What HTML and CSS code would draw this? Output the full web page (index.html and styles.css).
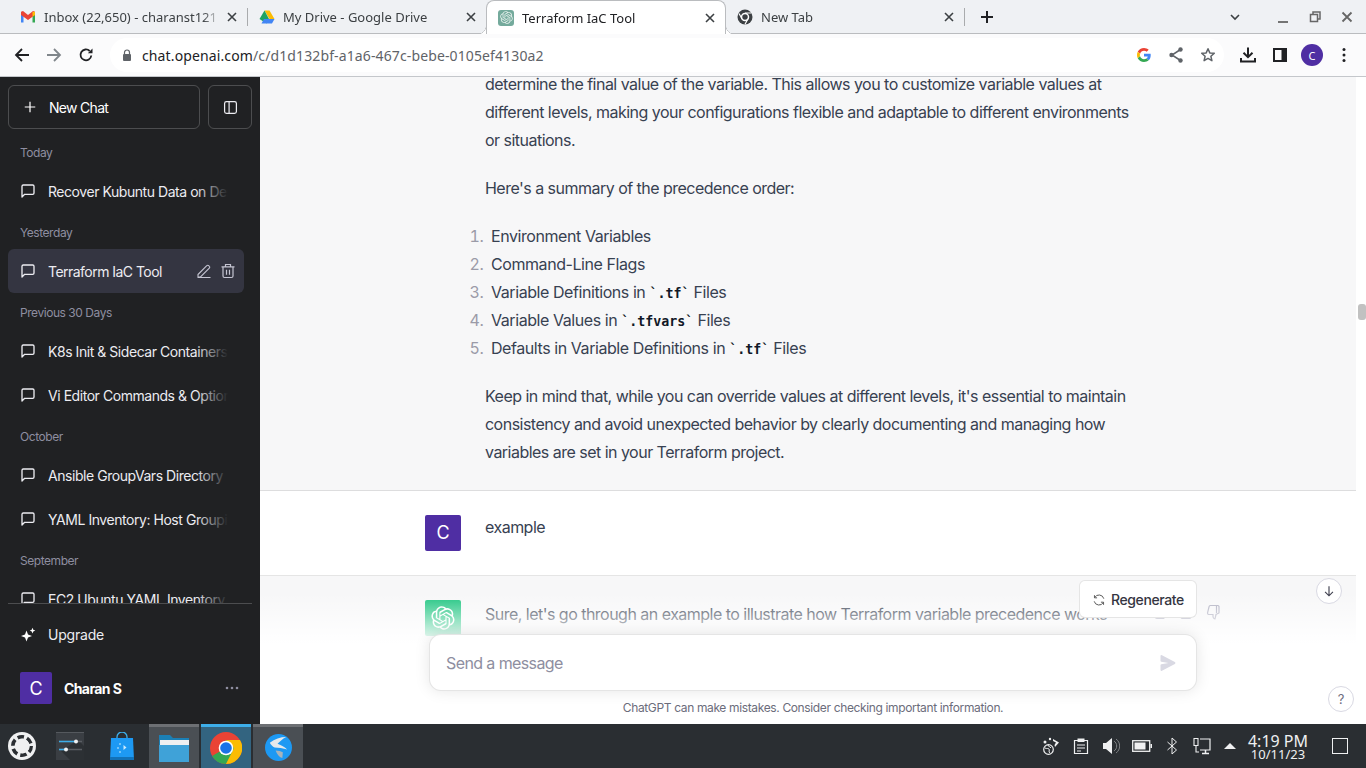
FILE: index.html
```html
<!DOCTYPE html>
<html lang="en">
  <head>
    <meta charset="UTF-8" />
    <meta name="viewport" content="width=device-width, initial-scale=1.0" />
    <title>Terraform IaC Tool</title>
    <link rel="stylesheet" href="styles.css">
  </head>
  <body>
    <svg class="sprites" width="0" height="0">
      <symbol id="chat" viewBox="0 0 24 24"><path d="M21 15a2 2 0 0 1-2 2H7l-4 4V5a2 2 0 0 1 2-2h14a2 2 0 0 1 2 2z" fill="none" stroke="currentColor" stroke-width="2" stroke-linecap="round" stroke-linejoin="round"/></symbol>
      <symbol id="oai" viewBox="0 0 41 41"><path fill="currentColor" d="M37.5324 16.8707C37.9808 15.5241 38.1363 14.0974 37.9886 12.6859C37.8409 11.2744 37.3934 9.91076 36.676 8.68622C35.6126 6.83404 33.9882 5.3676 32.0373 4.4985C30.0864 3.62941 27.9098 3.40259 25.8215 3.85078C24.8796 2.7893 23.7219 1.94125 22.4257 1.36341C21.1295 0.785575 19.7249 0.491269 18.3058 0.500197C16.1708 0.495044 14.0893 1.16803 12.3614 2.42214C10.6335 3.67624 9.34853 5.44666 8.6917 7.47815C7.30085 7.76286 5.98686 8.3414 4.8377 9.17505C3.68854 10.0087 2.73073 11.0782 2.02839 12.312C0.956464 14.1591 0.498905 16.2988 0.721698 18.4228C0.944492 20.5467 1.83612 22.5449 3.268 24.1293C2.81966 25.4759 2.66413 26.9026 2.81182 28.3141C2.95951 29.7256 3.40701 31.0892 4.12437 32.3138C5.18791 34.1659 6.8123 35.6322 8.76321 36.5013C10.7141 37.3704 12.8907 37.5973 14.9789 37.1492C15.9208 38.2107 17.0786 39.0587 18.3747 39.6366C19.6709 40.2144 21.0755 40.5087 22.4946 40.4998C24.6307 40.5054 26.7133 39.8321 28.4418 38.5772C30.1704 37.3223 31.4556 35.5506 32.1119 33.5179C33.5027 33.2332 34.8167 32.6547 35.9659 31.821C37.115 30.9874 38.0728 29.9178 38.7752 28.684C39.8458 26.8371 40.3023 24.6979 40.0789 22.5748C39.8556 20.4517 38.9639 18.4544 37.5324 16.8707ZM22.4978 37.8849C20.7443 37.8874 19.0459 37.2733 17.6994 36.1501C17.7601 36.117 17.8666 36.0586 17.936 36.0161L25.9004 31.4156C26.1003 31.3019 26.2663 31.137 26.3813 30.9378C26.4964 30.7386 26.5563 30.5124 26.5549 30.2825V19.0542L29.9213 20.998C29.9389 21.0068 29.9541 21.0198 29.9656 21.0359C29.977 21.052 29.9842 21.0707 29.9867 21.0902V30.3889C29.9842 32.375 29.1946 34.2791 27.7909 35.6841C26.3872 37.0892 24.4838 37.8806 22.4978 37.8849ZM6.39227 31.0064C5.51397 29.4888 5.19742 27.7107 5.49804 25.9832C5.55718 26.0187 5.66048 26.0818 5.73461 26.1244L13.699 30.7248C13.8975 30.8408 14.1233 30.902 14.3532 30.902C14.583 30.902 14.8088 30.8408 15.0073 30.7248L24.731 25.1103V28.9979C24.7321 29.0177 24.7283 29.0376 24.7199 29.0556C24.7115 29.0736 24.6988 29.0893 24.6829 29.1012L16.6317 33.7497C14.9096 34.7416 12.8643 35.0097 10.9447 34.4954C9.02506 33.9811 7.38785 32.7263 6.39227 31.0064ZM4.29707 13.6194C5.17156 12.0998 6.55279 10.9364 8.19885 10.3327C8.19885 10.4013 8.19491 10.5228 8.19491 10.6071V19.808C8.19351 20.0378 8.25334 20.2638 8.36823 20.4629C8.48312 20.6619 8.64893 20.8267 8.84863 20.9404L18.5723 26.5542L15.206 28.4979C15.1894 28.5089 15.1703 28.5155 15.1505 28.5173C15.1307 28.5191 15.1107 28.516 15.0924 28.5082L7.04046 23.8557C5.32135 22.8601 4.06716 21.2235 3.55289 19.3046C3.03862 17.3858 3.30624 15.3413 4.29707 13.6194ZM31.955 20.0556L22.2312 14.4411L25.5976 12.4981C25.6142 12.4872 25.6333 12.4805 25.6531 12.4787C25.6729 12.4769 25.6928 12.4801 25.7111 12.4879L33.7631 17.1364C34.9967 17.849 36.0017 18.8982 36.6606 20.1613C37.3194 21.4244 37.6047 22.849 37.4832 24.2684C37.3617 25.6878 36.8382 27.0432 35.9743 28.1759C35.1103 29.3086 33.9415 30.1717 32.6047 30.6641C32.6047 30.5947 32.6047 30.4733 32.6047 30.3889V21.188C32.6066 20.9586 32.5474 20.7328 32.4332 20.5338C32.319 20.3348 32.154 20.1698 31.955 20.0556ZM35.3055 15.0128C35.2464 14.9765 35.1431 14.9142 35.069 14.8717L27.1045 10.2712C26.906 10.1554 26.6803 10.0943 26.4504 10.0943C26.2206 10.0943 25.9948 10.1554 25.7963 10.2712L16.0726 15.8858V11.9982C16.0715 11.9783 16.0753 11.9585 16.0837 11.9405C16.0921 11.9225 16.1048 11.9068 16.1207 11.8949L24.1719 7.25025C25.4053 6.53903 26.8158 6.19376 28.2383 6.25482C29.6608 6.31589 31.0364 6.78077 32.2044 7.59508C33.3723 8.40939 34.2842 9.53945 34.8334 10.8531C35.3826 12.1667 35.5464 13.6095 35.3055 15.0128ZM14.2424 21.9419L10.8752 19.9981C10.8576 19.9893 10.8423 19.9763 10.8309 19.9602C10.8195 19.9441 10.8122 19.9254 10.8098 19.9058V10.6071C10.8107 9.18295 11.2173 7.78848 11.9819 6.58696C12.7466 5.38544 13.8377 4.42659 15.1275 3.82264C16.4173 3.21869 17.8524 2.99464 19.2649 3.1767C20.6775 3.35876 22.0089 3.93941 23.1034 4.85067C23.0427 4.88379 22.937 4.94215 22.8668 4.98473L14.9024 9.58517C14.7025 9.69878 14.5366 9.86356 14.4215 10.0626C14.3065 10.2616 14.2466 10.4877 14.2479 10.7175L14.2424 21.9419ZM16.071 17.9991L20.4018 15.4978L24.7325 17.9975V22.9985L20.4018 25.4983L16.071 22.9985V17.9991Z"/></symbol>
      <symbol id="close" viewBox="0 0 10 10"><path d="M1 1l8 8M9 1l-8 8" stroke="currentColor" stroke-width="1.600" fill="none"/></symbol>
    </svg>

    <div class="tabstrip">
      <div class="tab">
        <svg class="favicon" viewBox="0 0 16 16"><path d="M1 3.500v10h2.500V7z" fill="#4285f4"/><path d="M15 3.500v10h-2.500V7z" fill="#34a853"/><path d="M1 2.800 3 2l5 4 5-4 2 .8V6l-7 5-7-5z" fill="#ea4335"/><path d="M12.500 3 15 2.800V6l-2.500 1.800z" fill="#fbbc04"/></svg>
        <span class="tab-title">Inbox (22,650) - charanst121</span>
        <svg class="tab-close"><use href="#close"/></svg>
      </div>
      <div class="tab tab-sep">
        <svg class="favicon" viewBox="0 0 16 16"><path d="M5.500 1.500h5L15.500 10h-5z" fill="#fbbc04"/><path d="M5.500 1.500 10 10l-2.500 4.500L.500 10z" fill="#1ea362"/><path d="M5 10h10.500L13 14.500H2.500z" fill="#4285f4"/></svg>
        <span class="tab-title">My Drive - Google Drive</span>
        <svg class="tab-close"><use href="#close"/></svg>
      </div>
      <div class="tab active">
        <span class="favicon oai-fav"><svg><use href="#oai"/></svg></span>
        <span class="tab-title">Terraform IaC Tool</span>
        <svg class="tab-close"><use href="#close"/></svg>
      </div>
      <div class="tab">
        <svg class="favicon" viewBox="0 0 16 16"><circle cx="8" cy="8" r="7.500" fill="#3c4043"/><circle cx="8" cy="8" r="3.500" fill="#3c4043" stroke="#fff" stroke-width="1.500"/><path d="M8 4h6.200M5 9.700 2 4.500M11 9.700l-3 5.500" stroke="#fff" stroke-width="1.200"/></svg>
        <span class="tab-title">New Tab</span>
        <svg class="tab-close"><use href="#close"/></svg>
      </div>
      <div class="new-tab">
        <svg viewBox="0 0 14 14"><path d="M7 1v12M1 7h12" stroke="#202124" stroke-width="2"/></svg>
      </div>
      <div class="win-btns">
        <svg class="win-ico tab-list" viewBox="0 0 12 12"><path d="M2 4l4 4 4-4" fill="none" stroke="#3c4043" stroke-width="1.600"/></svg>
        <svg class="win-ico" viewBox="0 0 12 12"><path d="M1 11h10" stroke="#666" stroke-width="1.800"/></svg>
        <svg class="win-ico" viewBox="0 0 12 12"><path d="M1.500 3.500h7v7h-7z" fill="none" stroke="#666" stroke-width="1.500"/><path d="M4 3V1h7v7H9" fill="none" stroke="#666" stroke-width="1.500"/></svg>
        <svg class="win-ico" viewBox="0 0 12 12"><path d="M1.500 1.500l9 9M10.500 1.500l-9 9" stroke="#666" stroke-width="1.800"/></svg>
      </div>
    </div>

    <div class="toolbar">
      <svg class="nav-ico" viewBox="0 0 16 16"><path d="M15 8H2.500M8 2 2 8l6 6" fill="none" stroke="#202124" stroke-width="1.800"/></svg>
      <svg class="nav-ico" viewBox="0 0 16 16"><path d="M1 8h12.500M8 2l6 6-6 6" fill="none" stroke="#80868b" stroke-width="1.800"/></svg>
      <svg class="nav-ico" viewBox="0 0 16 16"><path d="M13.300 8.500A5.400 5.400 0 1 1 11.700 4" fill="none" stroke="#202124" stroke-width="1.800"/><path d="M9.800 6.200H14.500V1.500z" fill="#202124"/></svg>
      <div class="omnibox">
        <svg class="lock" viewBox="0 0 10 12"><path d="M2.500 5V3.500a2.500 2.500 0 0 1 5 0V5" fill="none" stroke="#5f6368" stroke-width="1.200"/><rect x="1" y="5" width="8" height="7" rx="1" fill="#5f6368"/></svg>
        <span class="url"><span class="host">chat.openai.com</span>/c/d1d132bf-a1a6-467c-bebe-0105ef4130a2</span>
        <span class="omni-icons">
          <svg viewBox="0 0 48 48"><path fill="#EA4335" d="M24 9.500c3.540 0 6.710 1.220 9.210 3.600l6.850-6.850C35.900 2.380 30.470 0 24 0 14.620 0 6.510 5.380 2.560 13.220l7.980 6.190C12.430 13.720 17.740 9.500 24 9.500z"/><path fill="#4285F4" d="M46.980 24.550c0-1.570-.15-3.090-.38-4.550H24v9.020h12.940c-.58 2.960-2.260 5.480-4.780 7.180l7.730 6c4.510-4.180 7.090-10.360 7.090-17.650z"/><path fill="#FBBC05" d="M10.530 28.590c-.48-1.450-.76-2.990-.76-4.590s.27-3.140.76-4.590l-7.980-6.190C.92 16.460 0 20.120 0 24c0 3.880.92 7.540 2.560 10.780l7.970-6.190z"/><path fill="#34A853" d="M24 48c6.480 0 11.930-2.130 15.890-5.810l-7.730-6c-2.150 1.450-4.920 2.300-8.160 2.300-6.260 0-11.570-4.220-13.470-9.910l-7.980 6.190C6.510 42.620 14.620 48 24 48z"/></svg>
          <svg viewBox="0 0 16 16"><path d="M12.500 2.500 4 8l8.500 5.500" fill="none" stroke="#5f6368" stroke-width="1.500"/><circle cx="12.500" cy="2.500" r="2.200" fill="#5f6368"/><circle cx="3.500" cy="8" r="2.200" fill="#5f6368"/><circle cx="12.500" cy="13.500" r="2.200" fill="#5f6368"/></svg>
          <svg viewBox="0 0 16 16"><path d="m8 1.800 1.800 4.100 4.500.4-3.400 3 1 4.400L8 11.400l-3.900 2.300 1-4.400-3.400-3 4.500-.4z" fill="none" stroke="#5f6368" stroke-width="1.500" stroke-linejoin="round"/></svg>
        </span>
      </div>
      <div class="tool-icons">
        <svg viewBox="0 0 16 16"><path d="M8 .5V10M3.500 5.700 8 10.200l4.500-4.500" fill="none" stroke="#202124" stroke-width="2"/><path d="M1 11v3.500h14V11" fill="none" stroke="#202124" stroke-width="2"/></svg>
        <svg viewBox="0 0 16 16"><path d="M2 2h12v12H2z" fill="none" stroke="#202124" stroke-width="2"/><path d="M9.500 2H14v12H9.500z" fill="#202124"/></svg>
        <span class="profile-dot">C</span>
        <svg class="dots" viewBox="0 0 4 16"><circle cx="2" cy="2.500" r="1.500" fill="#202124"/><circle cx="2" cy="8" r="1.500" fill="#202124"/><circle cx="2" cy="13.500" r="1.500" fill="#202124"/></svg>
      </div>
    </div>

    <div class="app">
      <aside class="sidebar">
        <div class="side-top">
          <div class="new-chat">
            <svg viewBox="0 0 16 16"><path d="M8 2v12M2 8h12" stroke="currentColor" stroke-width="1.400"/></svg>
            New Chat
          </div>
          <div class="side-toggle">
            <svg viewBox="0 0 16 16"><rect x="1.700" y="1.700" width="12.600" height="12.600" rx="2" fill="none" stroke="currentColor" stroke-width="1.300"/><path d="M6.500 2v12" stroke="currentColor" stroke-width="1.300"/></svg>
          </div>
        </div>
        <div class="history">
          <div class="group-label">Today</div>
          <div class="chat-item"><svg class="chat-ico"><use href="#chat"/></svg><span class="chat-title">Recover Kubuntu Data on Desktop</span></div>
          <div class="group-label">Yesterday</div>
          <div class="chat-item current">
            <svg class="chat-ico"><use href="#chat"/></svg><span class="chat-title">Terraform IaC Tool</span>
            <svg class="row-ico" viewBox="0 0 16 16"><path d="M1.500 14.500h13M2 11.500 10.800 2.700a1.300 1.300 0 0 1 1.900 0l.6.600a1.300 1.300 0 0 1 0 1.900L4.500 14H2z" fill="none" stroke="currentColor" stroke-width="1.100"/></svg>
            <svg class="row-ico" viewBox="0 0 16 16"><path d="M1.500 3.800h13M5.500 3.800V1.500h5v2.300M3 3.800V13a1.500 1.500 0 0 0 1.500 1.500h7A1.500 1.500 0 0 0 13 13V3.800M6.500 6.800v5M9.500 6.800v5" fill="none" stroke="currentColor" stroke-width="1.200"/></svg>
          </div>
          <div class="group-label">Previous 30 Days</div>
          <div class="chat-item"><svg class="chat-ico"><use href="#chat"/></svg><span class="chat-title">K8s Init &amp; Sidecar Containers</span></div>
          <div class="chat-item"><svg class="chat-ico"><use href="#chat"/></svg><span class="chat-title">Vi Editor Commands &amp; Options</span></div>
          <div class="group-label">October</div>
          <div class="chat-item"><svg class="chat-ico"><use href="#chat"/></svg><span class="chat-title">Ansible GroupVars Directory</span></div>
          <div class="chat-item"><svg class="chat-ico"><use href="#chat"/></svg><span class="chat-title">YAML Inventory: Host Grouping</span></div>
          <div class="group-label">September</div>
          <div class="chat-item"><svg class="chat-ico"><use href="#chat"/></svg><span class="chat-title">EC2 Ubuntu YAML Inventory</span></div>
        </div>
        <div class="side-bottom">
          <div class="upgrade">
            <svg viewBox="0 0 16 16"><path d="M6.500 3.500 8 7.500l4 1.500-4 1.500L6.500 14.500 5 10.500 1 9l4-1.500zM12.500 .8l.8 2 2 .8-2 .8-.8 2-.8-2-2-.8 2-.8z" fill="#fff"/></svg>
            Upgrade
          </div>
          <div class="user-row">
            <span class="side-avatar">C</span>
            <span class="user-name">Charan S</span>
            <svg class="user-more" viewBox="0 0 14 4"><circle cx="2" cy="2" r="1.300" fill="#8e8ea0"/><circle cx="7" cy="2" r="1.300" fill="#8e8ea0"/><circle cx="12" cy="2" r="1.300" fill="#8e8ea0"/></svg>
          </div>
        </div>
      </aside>

      <main class="content">
        <div class="thread">
          <section class="msg bot first">
            <div class="msg-inner">
              <div class="avatar-slot"></div>
              <div class="msg-body">
                <p>determine the final value of the variable. This allows you to customize variable values at<br>different levels, making your configurations flexible and adaptable to different environments<br>or situations.</p>
                <p>Here's a summary of the precedence order:</p>
                <ol>
                  <li>Environment Variables</li>
                  <li>Command-Line Flags</li>
                  <li>Variable Definitions in <code>`.tf`</code> Files</li>
                  <li>Variable Values in <code>`.tfvars`</code> Files</li>
                  <li>Defaults in Variable Definitions in <code>`.tf`</code> Files</li>
                </ol>
                <p>Keep in mind that, while you can override values at different levels, it's essential to maintain<br>consistency and avoid unexpected behavior by clearly documenting and managing how<br>variables are set in your Terraform project.</p>
              </div>
            </div>
          </section>
          <section class="msg user">
            <div class="msg-inner">
              <div class="avatar user-av">C</div>
              <div class="msg-body"><p>example</p></div>
            </div>
          </section>
          <section class="msg bot">
            <div class="msg-inner">
              <div class="avatar bot-av"><svg><use href="#oai"/></svg></div>
              <div class="msg-body"><p>Sure, let's go through an example to illustrate how Terraform variable precedence works</p></div>
            </div>
          </section>
        </div>

        <div class="msg-actions">
          <svg viewBox="0 0 16 16"><rect x="5" y="5" width="9.500" height="9.500" rx="2" fill="none" stroke="#acacbe" stroke-width="1.200"/><path d="M11 3V3a1.500 1.500 0 0 0-1.500-1.500h-6A2 2 0 0 0 1.500 3.500v6A1.500 1.500 0 0 0 3 11" fill="none" stroke="#acacbe" stroke-width="1.200"/></svg>
          <svg viewBox="0 0 16 16"><g transform="rotate(180 8 8)"><path d="M4.500 1.500h7a1.500 1.500 0 0 1 1.500 1v6.500l-3 1.500-1 4.300c-1 0-2-1-2-2.300V10.500H2.500A1.500 1.500 0 0 1 1.500 9L3 2.800a1.500 1.500 0 0 1 1.500-1.300zM10.500 1.700V9" fill="none" stroke="#acacbe" stroke-width="1.200"/></g></svg>
          <svg viewBox="0 0 16 16"><path d="M4.500 1.500h7a1.500 1.500 0 0 1 1.500 1v6.500l-3 1.500-1 4.300c-1 0-2-1-2-2.300V10.500H2.500A1.500 1.500 0 0 1 1.500 9L3 2.800a1.500 1.500 0 0 1 1.500-1.300zM10.500 1.700V9" fill="none" stroke="#acacbe" stroke-width="1.200"/></svg>
        </div>
        <div class="composer">
          <div class="regen">
            <svg viewBox="0 0 16 16"><path d="M13.500 6.500A5.700 5.700 0 0 0 3 5.200M2.500 9.500A5.700 5.700 0 0 0 13 10.800M2.800 2.500V5.500h3M13.200 13.500v-3h-3" fill="none" stroke="#555" stroke-width="1.100"/></svg>
            Regenerate
          </div>
          <div class="input-box">
            <span class="placeholder">Send a message</span>
            <svg class="send" viewBox="0 0 16 16"><path d="M.5 1.163A1 1 0 0 1 1.970.28l12.868 6.837a1 1 0 0 1 0 1.766L1.969 15.720A1 1 0 0 1 .5 14.836V10.330a1 1 0 0 1 .816-.983L8.500 8 1.316 6.653A1 1 0 0 1 .5 5.670V1.163Z" fill="#d9d9e3"/></svg>
          </div>
          <div class="disclaimer">ChatGPT can make mistakes. Consider checking important information.</div>
        </div>
        <div class="scroll-down"><svg viewBox="0 0 16 16"><path d="M8 2.500v11M3.500 9 8 13.500 12.500 9" fill="none" stroke="#40414f" stroke-width="1.300"/></svg></div>
        <div class="help">?</div>
        <div class="scrollbar"><span class="thumb-bar"></span></div>
      </main>
    </div>

    <footer class="taskbar">
      <div class="launcher">
        <span class="task-ico">
          <svg viewBox="0 0 28 28"><circle cx="14" cy="14" r="14" fill="#eff0f1"/><circle cx="14" cy="14" r="9.200" fill="none" stroke="#2a2e32" stroke-width="3.600" stroke-dasharray="6.500 3.150"/><circle cx="14.500" cy="14" r="7.200" fill="#eff0f1"/></svg>
        </span>
        <span class="task-ico">
          <svg viewBox="0 0 28 28"><rect width="28" height="28" fill="#3a3e43"/><path d="M5 19 14 28H28V14L22 8z" fill="#2c3034"/><rect width="28" height="1" fill="#55595e"/><path d="M3 9.500h23M3 17.500h23" stroke="#5a5e63" stroke-width="1.600"/><path d="M3 9.500h17M3 17.500h7" stroke="#3daee9" stroke-width="1.600"/><circle cx="20" cy="9.500" r="2" fill="#eff0f1"/><circle cx="10" cy="17.500" r="2" fill="#eff0f1"/></svg>
        </span>
        <span class="task-ico bag">
          <svg viewBox="0 0 24 28"><path d="M7 8V5a5 5 0 0 1 10 0v3" fill="none" stroke="#3daee9" stroke-width="1.300"/><path d="M1 6h22l1 22H0z" fill="#1d99f3"/><path d="M0 25h24v3H0z" fill="#1272b8"/><path d="m13.500 13 3 2.500-3 2.500z" fill="#cdeafc"/><circle cx="10" cy="12" r="1" fill="#8fd0f8"/><circle cx="10" cy="20" r="1" fill="#8fd0f8"/><circle cx="8" cy="16" r="1" fill="#8fd0f8"/></svg>
        </span>
      </div>
      <div class="task-app">
        <svg viewBox="0 0 30 28"><path d="M0 1h11l3 3h16v24H0z" fill="#1b7fb5"/><path d="M1 6h29v5H1z" fill="#eff0f1"/><path d="M0 11h30v17H0z" fill="#3fa2d8"/></svg>
      </div>
      <div class="task-app running">
        <svg viewBox="0 0 32 32"><circle cx="16" cy="16" r="16" fill="#ea4335"/><path d="M16 16 2.100 24A16 16 0 0 0 16 32l14-24H16z" fill="#34a853"/><path d="M16 8h14a16 16 0 0 1-14 24l8-16z" fill="#fbbc04"/><circle cx="16" cy="16" r="7.300" fill="#fff"/><circle cx="16" cy="16" r="5.800" fill="#1a73e8"/></svg>
      </div>
      <div class="task-app">
        <svg class="bird" viewBox="0 0 28 28"><circle cx="14" cy="14" r="14" fill="#1d99f3"/><path d="M5 9C10 5 16 3 22 3c-4 2-7 5-9 7 3 1 7 3 10 6-4-1-9-2-13-2-2-1-4-3-5-5z" fill="#e4e8eb"/><path d="M11 17c3 0 6 1 7.500 2l-.5 6c-3-1-5.500-4-7-8z" fill="#a9b3ba"/></svg>
      </div>
      <div class="tray">
        <svg viewBox="0 0 18 18"><circle cx="6.500" cy="12.500" r="4.800" fill="none" stroke="#eff0f1" stroke-width="1.200"/><path d="M3 11c2 1 3 0 4 1s-1 3 1 4M6 8c0 2 2 1 3 3" fill="none" stroke="#eff0f1"/><path d="m11 2 6 3.500-4 4.500-.5-2 1.500-2.500-3-1.500z" fill="#eff0f1"/><circle cx="3" cy="5" r="1.500" fill="#eff0f1"/><circle cx="8" cy="2" r="1.200" fill="#eff0f1"/></svg>
        <svg viewBox="0 0 18 18"><path d="M2.500 3.500h13v13h-13z" fill="none" stroke="#eff0f1" stroke-width="1.200"/><path d="M5.500 1.500h7v3.500h-7z" fill="#eff0f1"/><path d="M5 8h8M5 11h8M5 14h4" stroke="#eff0f1" stroke-width="1.200"/></svg>
        <svg viewBox="0 0 18 18"><path d="M1 6h3l6-5v16l-6-5H1z" fill="#eff0f1"/><path d="M12 4a6 6 0 0 1 0 10M14 2a8.500 8.500 0 0 1 0 14" fill="none" stroke="#7f8285" stroke-width="1"/></svg>
        <svg class="tray-wide" viewBox="0 0 20 18"><rect x=".7" y="3.700" width="17" height="10.600" fill="none" stroke="#eff0f1" stroke-width="1.300"/><rect x="2.500" y="5.500" width="11" height="7" fill="#eff0f1"/><path d="M18.500 7h1.500v4h-1.500z" fill="#eff0f1"/></svg>
        <svg viewBox="0 0 18 18"><path d="M4.500 5l9 8L9 17V1l4.500 4-9 8" fill="none" stroke="#eff0f1" stroke-width="1"/></svg>
        <svg viewBox="0 0 18 18"><path d="M1 1.500h4v7H1zM3 8.500V15h3" fill="none" stroke="#eff0f1" stroke-width="1.100"/><path d="M7 2h10v11H7" fill="none" stroke="#eff0f1" stroke-width="1.200"/><path d="M9 16.500h7M12.500 13v3" stroke="#eff0f1" stroke-width="1.500"/></svg>
        <svg class="tray-arrow" viewBox="0 0 12 8"><path d="M6 1l6 6H0z" fill="#eff0f1"/></svg>
      </div>
      <div class="clock">
        <div class="clock-time">4:19 PM</div>
        <div class="clock-date">10/11/23</div>
      </div>
      <div class="show-desktop"></div>
    </footer>
  </body>
</html>
```

FILE: styles.css
```css
* {
  margin: 0;
  padding: 0;
  box-sizing: border-box;
}
html,
body {
  width: 1366px;
  height: 768px;
  overflow: hidden;
}
body {
  display: flex;
  flex-direction: column;
  font-family: "Noto Sans", sans-serif;
  background: #fff;
}
.sprites {
  display: none;
}

/* browser tabs */
.tabstrip {
  height: 34px;
  flex: none;
  display: flex;
  align-items: stretch;
  padding-left: 8px;
  background: #eff1f4;
  border-bottom: 1px solid #babcbf;
  color: #3c4043;
  font-size: 13px;
}
.tab {
  width: 239px;
  display: flex;
  align-items: center;
  padding: 0 10px 0 12px;
  position: relative;
}
.tab-sep::before {
  content: "";
  position: absolute;
  left: 0;
  top: 8px;
  height: 18px;
  border-left: 1px solid #a9abad;
}
.tab.active {
  width: 240px;
  margin-right: -1px;
  height: 34px;
  background: #fff;
  border: 1px solid #babcbf;
  border-bottom: 0;
  border-radius: 8px 8px 0 0;
  padding: 0 10px 0 11px;
  color: #202124;
}
.tab.active::before,
.tab.active::after {
  content: "";
  position: absolute;
  bottom: 0;
  width: 8px;
  height: 8px;
}
.tab.active::before {
  left: -9px;
  background: radial-gradient(circle at 0 0, transparent 7.500px, #babcbf 8px, #fff 8.500px);
}
.tab.active::after {
  right: -9px;
  background: radial-gradient(circle at 100% 0, transparent 7.500px, #babcbf 8px, #fff 8.500px);
}
.favicon {
  width: 16px;
  height: 16px;
  flex: none;
  margin-right: 8px;
}
.oai-fav {
  background: #74aa9c;
  border-radius: 3px;
  color: #e3efeb;
  padding: 1.500px;
}
.oai-fav svg {
  display: block;
  width: 13px;
  height: 13px;
}
.tab-title {
  flex: 1;
  overflow: hidden;
  white-space: nowrap;
  min-width: 0;
  -webkit-mask-image: linear-gradient(to right, #000 calc(100% - 18px), transparent);
  mask-image: linear-gradient(to right, #000 calc(100% - 18px), transparent);
}
.tab-close {
  width: 10px;
  height: 10px;
  flex: none;
  color: #3c4043;
  margin-left: 6px;
}
.new-tab {
  width: 46px;
  position: relative;
  display: flex;
  align-items: center;
  justify-content: center;
}
.new-tab::before {
  content: "";
  position: absolute;
  left: 0;
  top: 8px;
  height: 18px;
  border-left: 1px solid #a9abad;
}
.new-tab svg {
  width: 14px;
  height: 14px;
}
.win-btns {
  margin-left: auto;
  display: flex;
  align-items: center;
  gap: 20px;
  padding-right: 13px;
}
.win-ico {
  width: 12px;
  height: 12px;
}
.tab-list {
  margin-right: 16px;
}

/* browser toolbar */
.toolbar {
  height: 43px;
  flex: none;
  display: flex;
  align-items: center;
  padding: 0 0 0 14px;
  gap: 16px;
  background: #fbfbfc;
  border-bottom: 1px solid #c4c7cb;
}
.nav-ico {
  width: 16px;
  height: 16px;
}
.omnibox {
  width: 1114px;
  height: 34px;
  display: flex;
  align-items: center;
  padding-left: 12px;
  border-radius: 17px;
  background: #fff;
  font-size: 14px;
  letter-spacing: 0.12px;
  color: #5f6368;
}
.lock {
  width: 10px;
  height: 12px;
  margin-right: 10px;
}
.host {
  color: #202124;
}
.omni-icons {
  margin-left: auto;
  display: flex;
  gap: 16px;
  padding-right: 8px;
}
.omni-icons svg {
  width: 16px;
  height: 16px;
}
.omni-icons svg:first-child {
  width: 14px;
  height: 14px;
  margin: 1px;
}
.tool-icons {
  display: flex;
  align-items: center;
  gap: 16px;
}
.tool-icons svg {
  width: 16px;
  height: 16px;
}
.tool-icons svg.dots {
  width: 4px;
}
.profile-dot {
  width: 22px;
  height: 22px;
  margin: 0 3px 0 -3px;
  border-radius: 50%;
  background: #4f2ea3;
  color: #fff;
  font-size: 11px;
  display: flex;
  align-items: center;
  justify-content: center;
}

/* chat app */
.app {
  flex: 1;
  min-height: 0;
  display: flex;
  font-family: Inter, "Liberation Sans", sans-serif;
}
.sidebar {
  width: 260px;
  flex: none;
  display: flex;
  flex-direction: column;
  background: #202123;
  color: #ececf1;
  font-size: 14px;
}
.side-top {
  display: flex;
  gap: 8px;
  padding: 8px 8px 4px;
}
.new-chat {
  width: 192px;
  height: 44px;
  display: flex;
  align-items: center;
  gap: 12px;
  padding-left: 14px;
  border: 1px solid rgba(255, 255, 255, 0.2);
  border-radius: 6px;
  color: #fff;
  letter-spacing: -0.7px;
}
.new-chat svg {
  width: 14px;
  height: 14px;
}
.side-toggle {
  width: 44px;
  height: 44px;
  display: flex;
  align-items: center;
  justify-content: center;
  border: 1px solid rgba(255, 255, 255, 0.2);
  border-radius: 6px;
}
.side-toggle svg {
  width: 15px;
  height: 15px;
}
.history {
  height: 470px;
  overflow: hidden;
  padding: 0 16px 0 8px;
}
.group-label {
  height: 36px;
  padding: 12px 12px 8px;
  font-size: 12px;
  line-height: 16px;
  color: #8e8ea0;
  letter-spacing: -0.45px;
}
.chat-item {
  height: 44px;
  display: flex;
  align-items: center;
  gap: 12px;
  padding: 0 16px 0 12px;
  border-radius: 6px;
  position: relative;
}
.chat-item.current {
  background: #343541;
  padding-right: 8px;
}
.chat-ico {
  width: 16px;
  height: 16px;
  flex: none;
  color: #ececf1;
}
.chat-title {
  flex: 1;
  min-width: 0;
  overflow: hidden;
  white-space: nowrap;
  letter-spacing: -0.45px;
  line-height: 20px;
  margin-top: 2px;
  position: relative;
}
.chat-title::after {
  content: "";
  position: absolute;
  top: 0;
  right: 0;
  bottom: 0;
  width: 32px;
  background: linear-gradient(to right, rgba(32, 33, 35, 0), #202123);
}
.current .chat-title {
  letter-spacing: -0.53px;
}
.current .chat-title::after {
  display: none;
}
.row-ico {
  width: 16px;
  height: 16px;
  flex: none;
  margin-left: -4px;
  color: #c5c5d2;
}
.side-bottom {
  flex: 1;
  padding: 0 8px;
}
.upgrade {
  height: 62px;
  display: flex;
  align-items: center;
  gap: 12px;
  padding-left: 12px;
  border-top: 1px solid rgba(255, 255, 255, 0.2);
  letter-spacing: -0.2px;
}
.upgrade svg {
  width: 16px;
  height: 16px;
}
.user-row {
  display: flex;
  align-items: center;
  gap: 12px;
  padding: 7px 12px;
}
.side-avatar {
  width: 32px;
  height: 32px;
  flex: none;
  display: flex;
  align-items: center;
  justify-content: center;
  background: #4f2ea3;
  border-radius: 2px;
  color: #fff;
  font-size: 18px;
}
.user-name {
  font-weight: 700;
  color: #fff;
  letter-spacing: -0.6px;
}
.user-more {
  width: 14px;
  height: 4px;
  margin-left: auto;
  margin-right: 1px;
}

/* conversation */
.content {
  flex: 1;
  min-width: 0;
  position: relative;
  overflow: hidden;
  background: #fff;
  color: #374151;
  font-size: 16px;
  line-height: 28px;
}
.thread {
  padding-right: 10px;
  margin-top: -7px;
}
.msg {
  padding: 24px 0;
  border-bottom: 1px solid rgba(0, 0, 0, 0.1);
}
.msg.bot {
  background: #f7f7f8;
}
.msg.first {
  padding-top: 0;
  padding-bottom: 24px;
}
.msg.user {
  padding-top: 22px;
  padding-bottom: 24px;
}
.msg-inner {
  width: 768px;
  margin: 0 auto;
  padding-left: 1px;
  display: flex;
  gap: 24px;
}
.avatar-slot {
  width: 36px;
  flex: none;
}
.avatar {
  width: 36px;
  height: 36px;
  flex: none;
  display: flex;
  align-items: center;
  justify-content: center;
  border-radius: 2px;
  color: #fff;
}
.user-av {
  margin-top: 2px;
  background: #4f2ea3;
  font-size: 18px;
}
.bot-av {
  background: #19c37d;
}
.bot-av svg {
  width: 24px;
  height: 24px;
}
.msg-body {
  flex: 1;
  letter-spacing: -0.52px;
  white-space: nowrap;
}
.msg-body p {
  margin-bottom: 20px;
}
.msg-body p:last-child {
  margin-bottom: 0;
}
.msg-body ol {
  margin-bottom: 20px;
  padding-left: 6px;
  letter-spacing: -0.43px;
}
.msg-body li::marker {
  content: counter(list-item) ".\00a0\00a0";
  color: #9b9ba8;
}
.msg-body code {
  font-family: "DejaVu Sans Mono", "Liberation Mono", monospace;
  font-size: 13.300px;
  line-height: 0;
  font-weight: 700;
  color: #111827;
  letter-spacing: 0;
}

/* bottom composer */
.msg-actions {
  position: absolute;
  left: 890px;
  top: 527px;
  display: flex;
  gap: 12px;
}
.msg-actions svg {
  width: 16px;
  height: 16px;
}
.composer {
  position: absolute;
  left: 0;
  right: 0;
  bottom: 0;
  height: 149px;
  display: flex;
  flex-direction: column;
  align-items: center;
  background: linear-gradient(to bottom, rgba(255, 255, 255, 0) 12%, #fff 46%);
}
.regen {
  align-self: flex-end;
  margin: 5px 169px 0 0;
  width: 118px;
  height: 38px;
  display: flex;
  align-items: center;
  gap: 5px;
  padding: 2px 0 0 12px;
  background: #fff;
  border: 1px solid rgba(0, 0, 0, 0.1);
  border-radius: 6px;
  font-size: 14px;
  font-weight: 500;
  color: #343541;
  letter-spacing: -0.4px;
}
.regen svg {
  width: 14px;
  height: 14px;
}
.input-box {
  width: 768px;
  height: 57px;
  margin-top: 16px;
  display: flex;
  align-items: center;
  padding: 0 20px 0 16px;
  background: #fff;
  border: 1px solid rgba(0, 0, 0, 0.1);
  border-radius: 12px;
  box-shadow: 0 0 15px rgba(0, 0, 0, 0.1);
}
.placeholder {
  flex: 1;
  color: #8e8ea0;
  letter-spacing: -0.6px;
}
.send {
  width: 16px;
  height: 16px;
}
.disclaimer {
  margin-top: 9px;
  font-size: 12px;
  line-height: 16px;
  color: #6b6c7b;
  letter-spacing: -0.36px;
}
.scroll-down,
.help {
  position: absolute;
  width: 26px;
  height: 26px;
  display: flex;
  align-items: center;
  justify-content: center;
  background: #fff;
  border: 1px solid #d9d9e3;
  border-radius: 50%;
}
.scroll-down {
  left: 1056px;
  top: 501px;
}
.scroll-down svg {
  width: 14px;
  height: 14px;
}
.help {
  left: 1068px;
  top: 609px;
  font-size: 13px;
  color: #6e6e80;
  line-height: 1;
}
.scrollbar {
  position: absolute;
  top: 0;
  right: 0;
  bottom: 0;
  width: 10px;
  background: #fff;
}
.thumb-bar {
  position: absolute;
  left: 2px;
  top: 227px;
  width: 8px;
  height: 16px;
  background: #c1c1c1;
  border-radius: 3px;
}

/* desktop panel */
.taskbar {
  height: 44px;
  flex: none;
  display: flex;
  align-items: stretch;
  background: #2a2e32;
  color: #eff0f1;
}
.launcher {
  display: flex;
  align-items: center;
  width: 149px;
  padding-left: 8px;
  gap: 20px;
}
.task-ico {
  width: 28px;
  height: 28px;
}
.task-ico svg {
  display: block;
  width: 28px;
  height: 28px;
}
.task-ico.bag,
.task-ico.bag svg {
  width: 24px;
}
.task-ico.bag {
  margin-left: 6px;
}
.task-app {
  width: 50px;
  margin-right: 2px;
  display: flex;
  align-items: center;
  justify-content: center;
  background: #4a4f54;
  border-top: 3px solid #6d7074;
}
.task-app svg {
  width: 30px;
  height: 30px;
}
.task-app svg.bird {
  width: 27px;
  height: 27px;
}
.task-app.running {
  background: #336480;
  border-top-color: #3daee9;
}
.task-app.running svg {
  width: 32px;
  height: 32px;
}
.tray {
  margin-left: auto;
  display: flex;
  align-items: center;
  gap: 12px;
}
.tray svg {
  width: 18px;
  height: 18px;
}
.tray .tray-wide {
  width: 20px;
  margin-right: -1px;
}
.tray .tray-arrow {
  width: 12px;
  height: 8px;
  margin-left: 1px;
}
.clock {
  width: 76px;
  margin-left: 4px;
  text-align: center;
  padding-top: 9px;
}
.clock-time {
  font-size: 16px;
  line-height: 16px;
}
.clock-date {
  margin-top: -1px;
  font-size: 13px;
  line-height: 13px;
}
.show-desktop {
  width: 16px;
  height: 16px;
  margin: 14px 18px 0 16px;
  border: 1px solid #eff0f1;
}
```
